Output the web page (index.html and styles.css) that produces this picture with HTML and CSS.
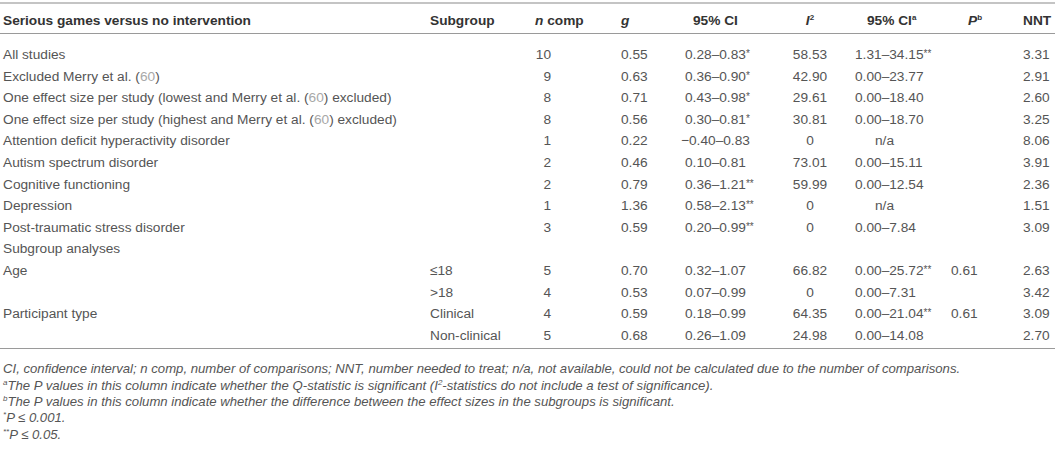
FILE: index.html
```html
<!DOCTYPE html>
<html>
<head>
<meta charset="utf-8">
<link rel="stylesheet" href="styles.css">
</head>
<body>
<table class="tbl">
  <colgroup>
    <col class="w-name"><col class="w-sub"><col class="w-n"><col class="w-g"><col class="w-ci"><col class="w-i2"><col class="w-cia"><col class="w-p"><col class="w-nnt">
  </colgroup>
  <thead>
    <tr>
      <th class="c-name">Serious games versus no intervention</th>
      <th class="c-sub">Subgroup</th>
      <th class="c-n"><i>n</i> comp</th>
      <th class="c-g"><i>g</i></th>
      <th class="c-ci">95% CI</th>
      <th class="c-i2"><i>I</i><sup>2</sup></th>
      <th class="c-cia">95% CI<sup>a</sup></th>
      <th class="c-p"><i>P</i><sup>b</sup></th>
      <th class="c-nnt">NNT</th>
    </tr>
  </thead>
  <tbody>
    <tr class="first"><td class="c-name">All studies</td><td class="c-sub"></td><td class="c-n">10</td><td class="c-g">0.55</td><td class="c-ci">0.28–0.83<span class="st">*</span></td><td class="c-i2">58.53</td><td class="c-cia">1.31–34.15<span class="st">**</span></td><td class="c-p"></td><td class="c-nnt">3.31</td></tr>
    <tr><td class="c-name">Excluded Merry et al. (<span class="ref">60</span>)</td><td class="c-sub"></td><td class="c-n">9</td><td class="c-g">0.63</td><td class="c-ci">0.36–0.90<span class="st">*</span></td><td class="c-i2">42.90</td><td class="c-cia">0.00–23.77</td><td class="c-p"></td><td class="c-nnt">2.91</td></tr>
    <tr><td class="c-name">One effect size per study (lowest and Merry et al. (<span class="ref">60</span>) excluded)</td><td class="c-sub"></td><td class="c-n">8</td><td class="c-g">0.71</td><td class="c-ci">0.43–0.98<span class="st">*</span></td><td class="c-i2">29.61</td><td class="c-cia">0.00–18.40</td><td class="c-p"></td><td class="c-nnt">2.60</td></tr>
    <tr><td class="c-name">One effect size per study (highest and Merry et al. (<span class="ref">60</span>) excluded)</td><td class="c-sub"></td><td class="c-n">8</td><td class="c-g">0.56</td><td class="c-ci">0.30–0.81<span class="st">*</span></td><td class="c-i2">30.81</td><td class="c-cia">0.00–18.70</td><td class="c-p"></td><td class="c-nnt">3.25</td></tr>
    <tr><td class="c-name">Attention deficit hyperactivity disorder</td><td class="c-sub"></td><td class="c-n">1</td><td class="c-g">0.22</td><td class="c-ci"><span class="neg">−0.40–0.83</span></td><td class="c-i2">0</td><td class="c-cia na">n/a</td><td class="c-p"></td><td class="c-nnt">8.06</td></tr>
    <tr><td class="c-name">Autism spectrum disorder</td><td class="c-sub"></td><td class="c-n">2</td><td class="c-g">0.46</td><td class="c-ci">0.10–0.81</td><td class="c-i2">73.01</td><td class="c-cia">0.00–15.11</td><td class="c-p"></td><td class="c-nnt">3.91</td></tr>
    <tr><td class="c-name">Cognitive functioning</td><td class="c-sub"></td><td class="c-n">2</td><td class="c-g">0.79</td><td class="c-ci">0.36–1.21<span class="st">**</span></td><td class="c-i2">59.99</td><td class="c-cia">0.00–12.54</td><td class="c-p"></td><td class="c-nnt">2.36</td></tr>
    <tr><td class="c-name">Depression</td><td class="c-sub"></td><td class="c-n">1</td><td class="c-g">1.36</td><td class="c-ci">0.58–2.13<span class="st">**</span></td><td class="c-i2">0</td><td class="c-cia na">n/a</td><td class="c-p"></td><td class="c-nnt">1.51</td></tr>
    <tr><td class="c-name">Post-traumatic stress disorder</td><td class="c-sub"></td><td class="c-n">3</td><td class="c-g">0.59</td><td class="c-ci">0.20–0.99<span class="st">**</span></td><td class="c-i2">0</td><td class="c-cia">0.00–7.84</td><td class="c-p"></td><td class="c-nnt">3.09</td></tr>
    <tr><td class="c-name">Subgroup analyses</td><td class="c-sub"></td><td class="c-n"></td><td class="c-g"></td><td class="c-ci"></td><td class="c-i2"></td><td class="c-cia"></td><td class="c-p"></td><td class="c-nnt"></td></tr>
    <tr><td class="c-name">Age</td><td class="c-sub">≤18</td><td class="c-n">5</td><td class="c-g">0.70</td><td class="c-ci">0.32–1.07</td><td class="c-i2">66.82</td><td class="c-cia">0.00–25.72<span class="st">**</span></td><td class="c-p">0.61</td><td class="c-nnt">2.63</td></tr>
    <tr><td class="c-name"></td><td class="c-sub">&gt;18</td><td class="c-n">4</td><td class="c-g">0.53</td><td class="c-ci">0.07–0.99</td><td class="c-i2">0</td><td class="c-cia">0.00–7.31</td><td class="c-p"></td><td class="c-nnt">3.42</td></tr>
    <tr><td class="c-name">Participant type</td><td class="c-sub">Clinical</td><td class="c-n">4</td><td class="c-g">0.59</td><td class="c-ci">0.18–0.99</td><td class="c-i2">64.35</td><td class="c-cia">0.00–21.04<span class="st">**</span></td><td class="c-p">0.61</td><td class="c-nnt">3.09</td></tr>
    <tr class="last"><td class="c-name"></td><td class="c-sub">Non-clinical</td><td class="c-n">5</td><td class="c-g">0.68</td><td class="c-ci">0.26–1.09</td><td class="c-i2">24.98</td><td class="c-cia">0.00–14.08</td><td class="c-p"></td><td class="c-nnt">2.70</td></tr>
  </tbody>
</table>
<div class="notes">
  <p>CI, confidence interval; n comp, number of comparisons; NNT, number needed to treat; n/a, not available, could not be calculated due to the number of comparisons.</p>
  <p><sup>a</sup>The P values in this column indicate whether the Q-statistic is significant (I<sup>2</sup>-statistics do not include a test of significance).</p>
  <p><sup>b</sup>The P values in this column indicate whether the difference between the effect sizes in the subgroups is significant.</p>
  <p><sup>*</sup>P ≤ 0.001.</p>
  <p><sup>**</sup>P ≤ 0.05.</p>
</div>
</body>
</html>
```

FILE: styles.css
```css
html, body {
  margin: 0;
  padding: 0;
  background: #ffffff;
}
body {
  font-family: "Liberation Sans", Arial, Helvetica, sans-serif;
  color: #555555;
  font-size: 13.7px;
}
.tbl {
  width: 1055px;
  table-layout: fixed;
  border-collapse: collapse;
  margin-top: 2px;
  border-top: 2px solid #c4c4c4;
  border-bottom: 1px solid #9a9a9a;
}
.w-name { width: 425px; }
.w-sub { width: 105px; }
.w-n { width: 80px; }
.w-g { width: 65px; }
.w-ci { width: 100px; }
.w-i2 { width: 70px; }
.w-cia { width: 100px; }
.w-p { width: 65px; }
.w-nnt { width: 45px; }

.tbl thead th {
  font-weight: bold;
  color: #333333;
  line-height: 21px;
  padding: 6px 0 2px 0;
  text-align: left;
  white-space: nowrap;
  border-bottom: 1px solid #9a9a9a;
}
.tbl th i { font-style: italic; }
.tbl sup {
  font-size: 8px;
  line-height: 0;
  vertical-align: 5px;
}
.tbl td {
  line-height: 21.6px;
  padding: 0;
  white-space: nowrap;
  text-align: left;
}
.tbl tr.first td { padding-top: 10px; }
.tbl tr.last td { padding-bottom: 2px; }

.c-name { padding-left: 3px !important; }
.c-sub { padding-left: 5px !important; }
th.c-n { padding-left: 5px !important; }
td.c-n { text-align: right !important; padding-right: 59px !important; }
.c-g { padding-left: 11px !important; }
th.c-ci { padding-left: 18px !important; }
td.c-ci { padding-left: 10px !important; }
.c-i2 { text-align: center !important; }
th.c-cia { padding-left: 22px !important; }
td.c-cia { padding-left: 10px !important; }
td.c-cia.na { padding-left: 30px !important; }
th.c-p { padding-left: 23px !important; }
td.c-p { padding-left: 6px !important; }
.c-nnt { padding-left: 13px !important; }

.neg { margin-left: -4px; }
.st {
  font-size: 10px;
  vertical-align: 2px;
  line-height: 0;
}
.ref { color: #a8a8a8; }

.notes {
  margin-top: 12px;
  padding-left: 3px;
  font-style: italic;
  font-size: 13.15px;
  line-height: 16.3px;
}
.notes p { margin: 0; }
.notes sup {
  font-size: 8px;
  line-height: 0;
  vertical-align: 5px;
}
```
